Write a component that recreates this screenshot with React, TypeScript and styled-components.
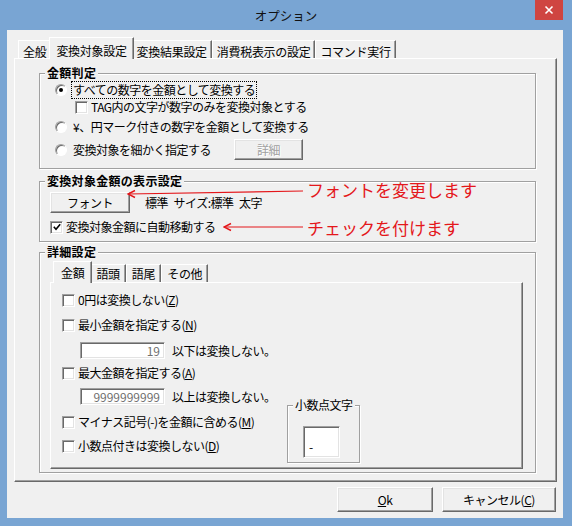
import React from "react";
import styled, { createGlobalStyle } from "styled-components";

const FONT = `"Noto Sans CJK JP", "Noto Sans CJK SC", "Noto Sans", sans-serif`;
const RED = "#e4171b";

const GlobalStyle = createGlobalStyle`
  html, body { margin: 0; padding: 0; background: #fff; }
  * { box-sizing: border-box; }
`;

const Window = styled.div`
  width: 572px;
  height: 526px;
  background: #79a5d3;
  display: flex;
  flex-direction: column;
  font-family: ${FONT};
  font-size: 12px;
  letter-spacing: -0.5px;
  color: #000;
`;

const TitleBar = styled.div`
  height: 30px;
  display: grid;
  grid-template-columns: 1fr auto 1fr;
  align-items: center;
`;

const TitleText = styled.div`
  font-size: 12.5px;
  letter-spacing: 0;
  color: #111;
`;

const CloseButton = styled.div`
  justify-self: end;
  align-self: start;
  width: 28px;
  height: 20px;
  margin-right: 9px;
  background: #cf4541;
  display: flex;
  align-items: center;
  justify-content: center;
`;

const Client = styled.div`
  flex: 1;
  margin: 0 9px 8px 7px;
  background: #f0f0f0;
  display: flex;
  flex-direction: column;
  padding: 0 6px 6px 7px;
`;

const TabStrip = styled.div<{ $pl: number; $h: number }>`
  height: ${(p) => p.$h}px;
  display: flex;
  align-items: flex-end;
  padding-left: ${(p) => p.$pl}px;
  flex: none;
`;

const Tab = styled.div<{ $active?: boolean; $pad: number; $pt: number }>`
  position: relative;
  height: ${(p) => (p.$active ? 22 : 18)}px;
  padding: ${(p) => p.$pt}px ${(p) => p.$pad + (p.$active ? 2 : 0)}px 0;
  margin: ${(p) => (p.$active ? "0 -2px -1px" : "0")};
  z-index: ${(p) => (p.$active ? 1 : 0)};
  background: #f0f0f0;
  border-top: 1px solid #fff;
  border-left: 1px solid #fff;
  border-right: 1px solid #696969;
  box-shadow: inset -1px 0 0 #a0a0a0;
  display: flex;
  align-items: center;
  white-space: nowrap;
  letter-spacing: -0.3px;
`;

const Panel = styled.div<{ $pad: string }>`
  flex: 1;
  display: flex;
  flex-direction: column;
  background: #f0f0f0;
  border: 1px solid;
  border-color: #fff #696969 #696969 #fff;
  box-shadow: inset -1px -1px 0 #a0a0a0;
  padding: ${(p) => p.$pad};
`;

const InnerPanel = styled(Panel)`
  flex-direction: row;
`;

const Group = styled.div<{ $mt: number; $grow?: boolean; $w?: number }>`
  position: relative;
  margin-top: ${(p) => p.$mt}px;
  ${(p) => (p.$w ? `width: ${p.$w}px;` : "")}
  flex: ${(p) => (p.$grow ? 1 : "none")};
  border: 1px solid #a0a0a0;
  box-shadow: 1px 1px 0 #fff, inset 1px 1px 0 #fff;
  display: flex;
  flex-direction: column;
`;

const GroupTitle = styled.div<{ $bold?: boolean }>`
  align-self: flex-start;
  margin: -9px 0 0 5px;
  padding: 0 2px;
  height: 16px;
  line-height: 16px;
  background: #f0f0f0;
  font-weight: ${(p) => (p.$bold ? 700 : 400)};
  letter-spacing: ${(p) => (p.$bold ? "0.3px" : "-0.5px")};
  white-space: nowrap;
`;

const GroupBody = styled.div<{ $pad: string }>`
  flex: 1;
  display: flex;
  flex-direction: column;
  padding: ${(p) => p.$pad};
`;

const Row = styled.div<{ $mt?: number; $ml?: number; $h?: number }>`
  display: flex;
  align-items: center;
  height: ${(p) => p.$h ?? 16}px;
  margin-top: ${(p) => p.$mt ?? 0}px;
  margin-left: ${(p) => p.$ml ?? 0}px;
  white-space: nowrap;
`;

const Radio = styled.span<{ $on?: boolean }>`
  flex: none;
  width: 12px;
  height: 12px;
  border-radius: 50%;
  background: #fff;
  border: 1px solid;
  border-color: #a0a0a0 #fff #fff #a0a0a0;
  box-shadow: inset 1px 1px 0 #696969;
  display: flex;
  align-items: center;
  justify-content: center;

  &::after {
    content: "";
    width: 4px;
    height: 4px;
    border-radius: 50%;
    background: ${(p) => (p.$on ? "#000" : "transparent")};
  }
`;

const Check = styled.span`
  flex: none;
  width: 13px;
  height: 13px;
  background: #fff;
  border: 1px solid;
  border-color: #a0a0a0 #fff #fff #a0a0a0;
  box-shadow: inset 1px 1px 0 #696969, inset -1px -1px 0 #e3e3e3;
  display: flex;
  align-items: center;
  justify-content: center;
`;

const Label = styled.span<{ $ml?: number; $color?: string }>`
  margin-left: ${(p) => p.$ml ?? 3}px;
  line-height: 16px;
  color: ${(p) => p.$color ?? "#000"};
`;

const FocusLabel = styled(Label)`
  outline: 1px dotted #000;
  padding: 0 1px;
`;

const PushButton = styled.div<{ $w: number; $h: number; $ml?: number; $disabled?: boolean }>`
  flex: none;
  width: ${(p) => p.$w}px;
  height: ${(p) => p.$h}px;
  margin-left: ${(p) => p.$ml ?? 0}px;
  background: #f0f0f0;
  border: 1px solid;
  border-color: #fff #696969 #696969 #fff;
  box-shadow: inset -1px -1px 0 #a0a0a0, inset 1px 1px 0 #e3e3e3;
  display: flex;
  align-items: center;
  justify-content: center;
  color: ${(p) => (p.$disabled ? "#a0a0a0" : "#000")};
  text-shadow: ${(p) => (p.$disabled ? "1px 1px 0 #fff" : "none")};
`;

const Field = styled.div<{ $w: number; $h: number; $ml?: number; $mt?: number; $dim?: boolean }>`
  flex: none;
  width: ${(p) => p.$w}px;
  height: ${(p) => p.$h}px;
  margin-left: ${(p) => p.$ml ?? 0}px;
  margin-top: ${(p) => p.$mt ?? 0}px;
  background: #fff;
  border: 1px solid;
  border-color: #a0a0a0 #fff #fff #a0a0a0;
  box-shadow: inset 1px 1px 0 #696969, inset -1px -1px 0 #e3e3e3;
  display: flex;
  align-items: ${(p) => (p.$dim ? "center" : "flex-end")};
  justify-content: ${(p) => (p.$dim ? "flex-end" : "flex-start")};
  padding: ${(p) => (p.$dim ? "0 4px 0 0" : "0 0 2px 5px")};
  line-height: 16px;
  color: ${(p) => (p.$dim ? "#6f6f6f" : "#000")};
  letter-spacing: 0;
`;

const Callout = styled.div<{ $left: number; $top: number }>`
  position: absolute;
  left: ${(p) => p.$left}px;
  top: ${(p) => p.$top}px;
  height: 20px;
  display: flex;
  align-items: center;
  pointer-events: none;
`;

const CalloutText = styled.span`
  margin-left: 4px;
  font-size: 17px;
  line-height: 20px;
  letter-spacing: 0;
  color: ${RED};
  white-space: nowrap;
`;

const LeftCol = styled.div`
  width: 225px;
  flex: none;
  display: flex;
  flex-direction: column;
`;

const RightCol = styled.div`
  padding-top: 114px;
`;

const Footer = styled.div`
  height: 25px;
  margin-top: 5px;
  padding-right: 1px;
  display: flex;
  justify-content: flex-end;
  gap: 9px;
  flex: none;
`;

function Arrow({ w, y0, y1 }: { w: number; y0: number; y1: number }) {
  return (
    <svg width={w} height={20} style={{ display: "block", flex: "none" }}>
      <polyline
        points={`8,${y0 - 3.5} 1,${y0} 8,${y0 + 3.5}`}
        fill="none"
        stroke={RED}
        strokeWidth={1.4}
      />
      <line x1={1} y1={y0} x2={w} y2={y1} stroke={RED} strokeWidth={1.2} />
    </svg>
  );
}

function CheckMark() {
  return (
    <svg width={8} height={8} viewBox="0 0 8 8">
      <polyline points="0.8,3.8 3,6.2 7.2,1.2" fill="none" stroke="#000" strokeWidth={1.6} />
    </svg>
  );
}

const outerTabs = ["全般", "変換対象設定", "変換結果設定", "消費税表示の設定", "コマンド実行"];
const innerTabs = ["金額", "語頭", "語尾", "その他"];

export default function App() {
  return (
    <>
      <GlobalStyle />
      <Window>
        <TitleBar>
          <div />
          <TitleText>オプション</TitleText>
          <CloseButton>
            <svg width={10} height={10} viewBox="0 0 10 10">
              <path d="M1.5 1.5 L8.5 8.5 M8.5 1.5 L1.5 8.5" stroke="#fff" strokeWidth={1.6} />
            </svg>
          </CloseButton>
        </TitleBar>

        <Client>
          <TabStrip $pl={4} $h={28}>
            {outerTabs.map((t, i) => (
              <Tab key={t} $active={i === 1} $pad={4} $pt={3}>
                {t}
              </Tab>
            ))}
          </TabStrip>

          <Panel $pad="0 20px 8px 24px">
            <Group $mt={14}>
              <GroupTitle $bold>金額判定</GroupTitle>
              <GroupBody $pad="0 0 8px 15px">
                <Row $mt={1}>
                  <Radio $on />
                  <FocusLabel $ml={5}>すべての数字を金額として変換する</FocusLabel>
                </Row>
                <Row $mt={1} $ml={20}>
                  <Check />
                  <Label>TAG内の文字が数字のみを変換対象とする</Label>
                </Row>
                <Row $mt={4}>
                  <Radio />
                  <Label $ml={6}>¥、円マーク付きの数字を金額として変換する</Label>
                </Row>
                <Row $mt={4} $h={21}>
                  <Radio />
                  <Label $ml={6}>変換対象を細かく指定する</Label>
                  <PushButton $w={69} $h={21} $ml={23} $disabled>
                    詳細
                  </PushButton>
                </Row>
              </GroupBody>
            </Group>

            <Group $mt={12}>
              <GroupTitle $bold>変換対象金額の表示設定</GroupTitle>
              <GroupBody $pad="0 0 6px 10px">
                <Row $mt={3} $h={21}>
                  <PushButton $w={80} $h={21}>
                    フォント
                  </PushButton>
                  <Label $ml={15}>標準&ensp;サイズ:標準&ensp;太字</Label>
                </Row>
                <Row $mt={6}>
                  <Check>
                    <CheckMark />
                  </Check>
                  <Label>変換対象金額に自動移動する</Label>
                </Row>
              </GroupBody>
              <Callout $left={87} $top={-2}>
                <Arrow w={176} y0={14} y1={11} />
                <CalloutText>フォントを変更します</CalloutText>
              </Callout>
              <Callout $left={183} $top={36}>
                <Arrow w={80} y0={9} y1={9} />
                <CalloutText>チェックを付けます</CalloutText>
              </Callout>
            </Group>

            <Group $mt={10} $grow>
              <GroupTitle $bold>詳細設定</GroupTitle>
              <GroupBody $pad="0 12px 3px 10px">
                <TabStrip $pl={5} $h={22}>
                  {innerTabs.map((t, i) => (
                    <Tab key={t} $active={i === 0} $pad={5} $pt={0}>
                      {t}
                    </Tab>
                  ))}
                </TabStrip>
                <InnerPanel $pad="8px 0 0 11px">
                  <LeftCol>
                    <Row $h={18}>
                      <Check />
                      <Label>
                        0円は変換しない(<u>Z</u>)
                      </Label>
                    </Row>
                    <Row $h={18} $mt={7}>
                      <Check />
                      <Label>
                        最小金額を指定する(<u>N</u>)
                      </Label>
                    </Row>
                    <Row $h={17} $mt={8}>
                      <Field $w={85} $h={17} $ml={18} $dim>
                        19
                      </Field>
                      <Label $ml={7}>以下は変換しない。</Label>
                    </Row>
                    <Row $h={18} $mt={5}>
                      <Check />
                      <Label>
                        最大金額を指定する(<u>A</u>)
                      </Label>
                    </Row>
                    <Row $h={17} $mt={6}>
                      <Field $w={85} $h={17} $ml={18} $dim>
                        9999999999
                      </Field>
                      <Label $ml={7}>以上は変換しない。</Label>
                    </Row>
                    <Row $h={18} $mt={8}>
                      <Check />
                      <Label>
                        マイナス記号(-)を金額に含める(<u>M</u>)
                      </Label>
                    </Row>
                    <Row $h={18} $mt={6}>
                      <Check />
                      <Label>
                        小数点付きは変換しない(<u>D</u>)
                      </Label>
                    </Row>
                  </LeftCol>
                  <RightCol>
                    <Group $mt={0} $w={73}>
                      <GroupTitle>小数点文字</GroupTitle>
                      <GroupBody $pad="0 0 4px 15px">
                        <Field $w={37} $h={32} $mt={13}>
                          -
                        </Field>
                      </GroupBody>
                    </Group>
                  </RightCol>
                </InnerPanel>
              </GroupBody>
            </Group>
          </Panel>

          <Footer>
            <PushButton $w={96} $h={25}>
              <span>
                <u>O</u>k
              </span>
            </PushButton>
            <PushButton $w={114} $h={25}>
              <span>
                キャンセル(<u>C</u>)
              </span>
            </PushButton>
          </Footer>
        </Client>
      </Window>
    </>
  );
}
